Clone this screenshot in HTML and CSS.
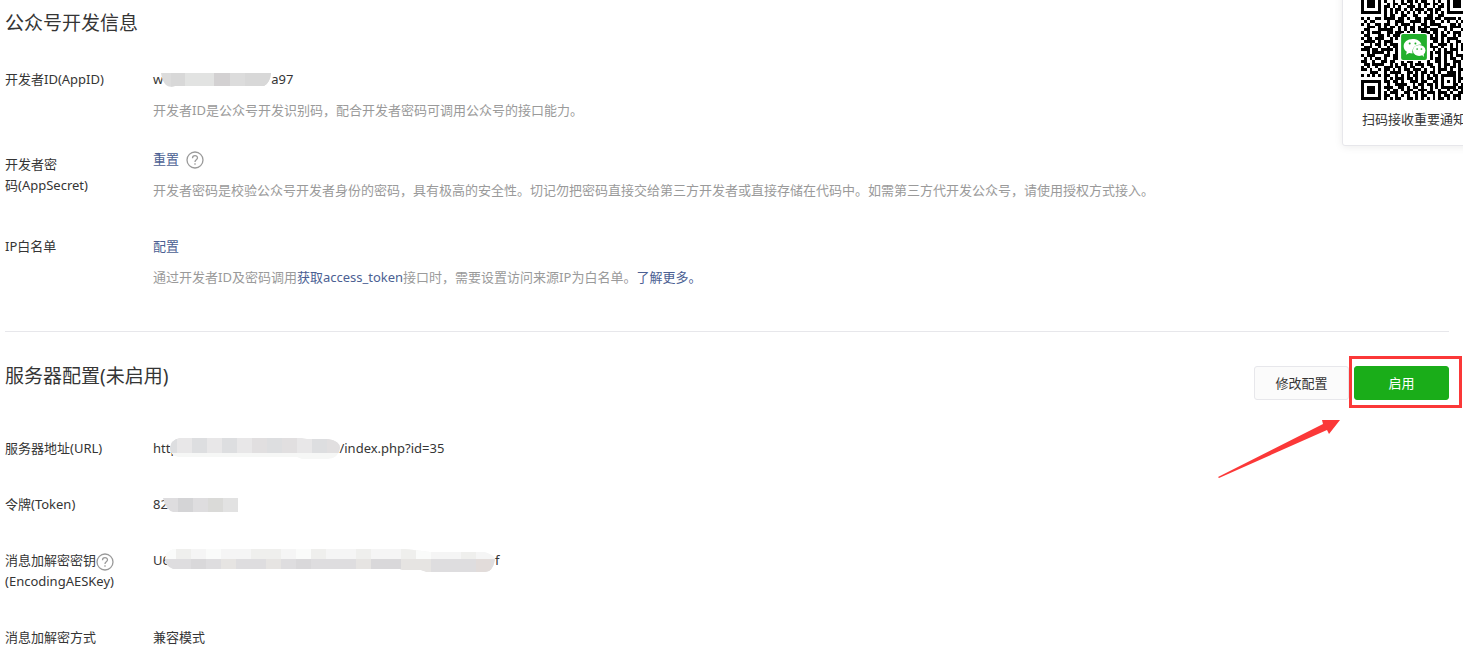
FILE: index.html
```html
<!DOCTYPE html>
<html lang="zh-CN">
<head>
    <meta charset="UTF-8">
    <meta name="viewport" content="width=device-width, initial-scale=1.0">
    <title>公众号开发信息</title>
    <link rel="stylesheet" href="styles.css">
</head>
<body>
    <main class="container">
        <section class="section">
            <div class="section-head">
                <h2>公众号开发信息</h2>
            </div>
            <div class="row">
                <div class="label">开发者ID(AppID)</div>
                <div class="content">
                    <p class="value">w<svg class="mask mask-id" width="110" height="14" viewBox="0 0 110 14"><clipPath id="m1"><path d="M0 0H110Q109 10 103 13H14Q8 15 5 12Q1 8 0 0Z"/></clipPath><g clip-path="url(#m1)"><path fill="#dcdcdc" d="M0 0h110v14H0z"/><path fill="#d8d8d8" d="M10 0h14v14H10zM84 0h26v14H84z"/><path fill="#e2e3e2" d="M24 0h14v14H24zM38 0h15v14H38z"/><path fill="#d3d1d2" d="M53 0h16v14H53z"/></g></svg>a97</p>
                    <p class="tips">开发者ID是公众号开发识别码，配合开发者密码可调用公众号的接口能力。</p>
                </div>
            </div>
            <div class="row row-center">
                <div class="label">开发者密<br>码(AppSecret)</div>
                <div class="content">
                    <p class="value"><a href="#">重置</a><svg class="ask ask-gap" width="18" height="18" viewBox="0 0 18 18"><circle cx="9" cy="9" r="8"/><path d="M6.5 7.2C6.5 3.8 11.6 3.9 11.5 7C11.4 8.8 9 8.8 9 11M9 12.3v1.4"/></svg></p>
                    <p class="tips">开发者密码是校验公众号开发者身份的密码，具有极高的安全性。切记勿把密码直接交给第三方开发者或直接存储在代码中。如需第三方代开发公众号，请使用授权方式接入。</p>
                </div>
            </div>
            <div class="row">
                <div class="label">IP白名单</div>
                <div class="content">
                    <p class="value"><a href="#">配置</a></p>
                    <p class="tips">通过开发者ID及密码调用<a href="#">获取access_token</a>接口时，需要设置访问来源IP为白名单。<a href="#">了解更多。</a></p>
                </div>
            </div>
        </section>

        <section class="section">
            <div class="section-head">
                <h2>服务器配置(未启用)</h2>
                <div class="buttons">
                    <button class="btn" type="button">修改配置</button>
                    <button class="btn btn-primary" type="button">启用</button>
                    <div class="highlight"></div>
                    <svg class="arrow" width="124" height="60" viewBox="0 0 124 60"><path fill="#fb3838" d="M1 58L106 5L105 1H123L112 15L110 11L2 59Z"/></svg>
                </div>
            </div>
            <div class="row">
                <div class="label">服务器地址(URL)</div>
                <div class="content">
                    <p class="value">http<svg class="mask mask-url" width="170" height="21" viewBox="0 0 170 21"><clipPath id="m2"><path d="M9 0H132L137 1H158Q170 3 170 10Q168 21 158 21H132L127 19H8Q0 17 0 10Q1 2 9 0Z"/></clipPath><g clip-path="url(#m2)"><path fill="#e8e7e8" d="M0 0h170v15H0z"/><path fill="#f6f7f6" d="M0 15h170v6H0z"/><path fill="#dddee0" d="M0 0h7v15H0zM22 0h15v15H22zM52 0h15v15H52zM97 0h15v15H97zM142 0h15v15h-15z"/><path fill="#e1dfe0" d="M82 0h15v15H82zM112 0h15v15h-15zM157 0h13v15h-13z"/></g></svg>/index.php?id=35</p>
                </div>
            </div>
            <div class="row">
                <div class="label">令牌(Token)</div>
                <div class="content">
                    <p class="value">82<svg class="mask mask-key" width="75" height="14" viewBox="0 0 75 14"><clipPath id="m3"><path d="M0 0H75V14H10Q3 12 0 0Z"/></clipPath><g clip-path="url(#m3)"><path fill="#dedddf" d="M0 0h75v14H0z"/><path fill="#d4d4d6" d="M15 0h15v14H15z"/><path fill="#dadad8" d="M45 0h15v14H45z"/><path fill="#e2e2e2" d="M60 0h15v14H60z"/></g></svg></p>
                </div>
            </div>
            <div class="row">
                <div class="label">消息加解密密钥<svg class="ask" width="18" height="18" viewBox="0 0 18 18"><circle cx="9" cy="9" r="8"/><path d="M6.5 7.2C6.5 3.8 11.6 3.9 11.5 7C11.4 8.8 9 8.8 9 11M9 12.3v1.4"/></svg><br>(EncodingAESKey)</div>
                <div class="content">
                    <p class="value">U6<svg class="mask mask-key" width="330" height="23" viewBox="0 0 330 23"><clipPath id="m4"><path d="M9 0H241L265 3H320Q330 6 330 11Q328 23 320 23H262L256 21H238L235 20H8Q0 17 0 10Q1 2 9 0Z"/></clipPath><g clip-path="url(#m4)"><path fill="#f5f5f5" d="M0 0h330v10H0z"/><path fill="#dedddf" d="M0 10h330v13H0z"/><path fill="#efefed" d="M11 0h15v10H11zM86 0h30v10H86zM146 0h15v10h-15zM191 0h15v10h-15zM236 0h15v10h-15zM296 0h15v10h-15z"/><path fill="#fafbfa" d="M0 0h11v10H0zM41 0h15v10H41zM131 0h15v10h-15zM251 0h15v10h-15z"/><path fill="#e6e4e2" d="M56 10h15v13H56zM101 10h15v13h-15zM191 10h15v13h-15zM236 10h30v13h-30z"/><path fill="#d9d8da" d="M26 10h15v13H26zM131 10h15v13h-15zM206 10h30v13h-30z"/><path fill="#e2dcda" d="M311 10h15v13h-15z"/></g></svg>f</p>
                </div>
            </div>
            <div class="row">
                <div class="label">消息加解密方式</div>
                <div class="content">
                    <p class="value">兼容模式</p>
                </div>
            </div>
        </section>
    </main>

    <aside class="qr-card">
        <svg class="qr" width="106" height="106" viewBox="0 0 37 37">
            <path id="qr-modules" shape-rendering="crispEdges"/>
            <rect x="13.6" y="13.6" width="9.8" height="9.8" rx="1" fill="#fff"/>
            <rect x="14" y="14" width="9" height="9" rx=".7" fill="#22b02c"/>
            <path fill="#fff" d="M18 15.7c-1.800 0-3.100 1.100-3.100 2.500 0 .8.4 1.500 1.100 2l-.3 1 1.100-.6 1.200.2c-.4-2 1.100-3.300 3.100-3.200-.3-1.200-1.600-1.900-3.100-1.900z"/>
            <ellipse cx="20.300" cy="19.700" rx="2.200" ry="1.900" fill="#fff"/>
            <path fill="#fff" d="M21 21l1 1-.2-1.500z"/>
            <g fill="#22b02c"><circle cx="17" cy="17.300" r=".35"/><circle cx="19" cy="17.300" r=".35"/><circle cx="19.600" cy="19.200" r=".3"/><circle cx="21.100" cy="19.200" r=".3"/></g>
        </svg>
        <p>扫码接收重要通知</p>
    </aside>

    <script src="qr.js"></script>
</body>
</html>
```

FILE: styles.css
```css
* {
    box-sizing: border-box;
}

body {
    position: relative;
    margin: 0;
    min-height: 100vh;
    overflow: hidden;
    background-color: #fff;
    color: #353535;
    font-family: "Noto Sans", "Noto Sans CJK SC", sans-serif;
    font-size: 13px;
    line-height: 21px;
}

h2,
p {
    margin: 0;
}

h2 {
    font-size: 19px;
    font-weight: 400;
    line-height: 28px;
}

a {
    color: #4c5f93;
    text-decoration: none;
}

.container {
    padding: 9px 14px 0 5px;
}

.section + .section {
    margin-top: 43px;
    padding-top: 30px;
    border-top: 1px solid #e7e7eb;
}

.section-head {
    display: flex;
    justify-content: space-between;
    margin-bottom: 32px;
}

.section + .section .section-head {
    height: 44px;
}

.row {
    display: flex;
    margin-top: 35px;
}

.section-head + .row {
    margin-top: 0;
}

/* two-line label next to a value with a hint */
.row-center {
    align-items: center;
    margin-top: 28px;
}

.label {
    flex: none;
    width: 148px;
}

.content {
    flex: 1;
}

.value {
    display: flex;
    height: 21px;
    align-items: center;
}

.tips {
    margin-top: 10px;
    color: #9a9a9a;
}

/* blurred-out part of a secret value */
.mask {
    flex: none;
}

.mask-id {
    margin-left: -2px;
}

.mask-url {
    margin: 0 -1px 0 -8px;
}

.mask-key {
    margin-left: -5px;
}

.ask {
    flex: none;
    fill: none;
    stroke: #9a9a9a;
    stroke-width: 1.3;
    vertical-align: middle;
}

.label .ask {
    margin: -4px 0;
}

.ask-gap {
    margin-left: 7px;
}

.buttons {
    position: relative;
    display: flex;
    gap: 5px;
    margin-top: 4px;
}

.btn {
    width: 95px;
    height: 34px;
    padding: 0;
    border: 1px solid #e7e7eb;
    border-radius: 3px;
    background-color: #fbfbfb;
    color: #353535;
    font: inherit;
    cursor: pointer;
}

.btn-primary {
    border-color: #1aad19;
    background-color: #1aad19;
    color: #fff;
}

.highlight {
    position: absolute;
    top: -10px;
    right: -13px;
    width: 113px;
    height: 52px;
    border: 3px solid #fb3838;
    pointer-events: none;
}

.arrow {
    position: absolute;
    top: 53px;
    right: 108px;
}

.qr-card {
    position: absolute;
    top: -25px;
    right: -23px;
    width: 144px;
    padding: 18px 18px 15px;
    border: 1px solid #e7e7eb;
    border-radius: 3px;
    background-color: #fff;
    box-shadow: 0 1px 8px rgba(0, 0, 0, 0.08);
    text-align: center;
    white-space: nowrap;
}

.qr {
    display: block;
    margin-bottom: 9px;
}
```

FILE: qr.js
```js
// one string per row of modules, # is dark
const rows = [
    "#######.#.##..#.###.#..##.#.#.#######",
    "#.....#..##.#.##..#.##.#.#.##.#.....#",
    "#.###.#.#..#..#.##.#.##..#.#..#.###.#",
    "#.###.#..#.##.##.#..#.##.##.#.#.###.#",
    "#.###.#.##.#.#..###.#.#..#.##.#.###.#",
    "#.....#.#.#.##.#.#.###.##.##..#.....#",
    "#######.#.#.#.#.#.#.#.#.#.#.#.#######",
    "........#.##..##..##...##..##........",
    "#.#..##.####.##.#..##.###.##.####.#..",
    ".#.##....#..###..####.#.##..#.#..#.##",
    "#.#..##.##..#.###.#..##.####...##.#.#",
    "..###.#.#.##.#.#.##.#.##...###.####..",
    ".##...#####..#.#.##.###.###..#.#...##",
    "#.#.###..##.###.#.#..###.##.#.#.###.#",
    ".##...##.#.###.########.#.#.##..#.#.#",
    "#.##.###..#.#.#########.###.#.####..#",
    ".####.#.###...#########..##.#.#..##.#",
    "#..#.##.#.###.#########.#..###.#.#.#.",
    ".###..#..#.##.#########.###.#..#.#.##",
    "###.##.####.#.#########..#.#.#.###.#.",
    "..#.####.#..#.#########.#.##.###.#..#",
    "#.###...##.##.#########.#..#.#.#.####",
    ".#.#.##.#..##.#########.#.##.#.##..#.",
    "##..#..##.##..#.##..#..#..##.#..###.#",
    ".##.####..#.#.##.#.###.##..#.##.#.#.#",
    "#.#..#..###.##.#.##..#..##.#.#.##.#..",
    "##.#..#.##.#.#.##.###.#..#.###.#..###",
    "...###..#.####..##.#.##.##.#..###.#.#",
    "#.#.#.#.##..#.#.#.##.#.#.##.#####.#.#",
    "........#.#.###.##.#.#.##.#.#...#.##.",
    "#######.##.##.#..###.##..##.#.#.#.#.#",
    "#.....#..#..####..#.##.##.#.#...##.#.",
    "#.###.#.###..##.#.##.#..#.#.#####.##.",
    "#.###.#..#.##.#.##..###.#..#..#.##.#.",
    "#.###.#.#.###..##.##.#.###.###.#..###",
    "#.....#.##..#.#.#..#.##..#.#.##.###.#",
    "#######.#.#.##..##.#.#.#.#.##.#.#.#.#"
];

let d = "";
rows.forEach((row, y) => {
    [...row].forEach((cell, x) => {
        if (cell === "#") d += `M${x} ${y}h1v1h-1z`;
    });
});
document.getElementById("qr-modules").setAttribute("d", d);
```
